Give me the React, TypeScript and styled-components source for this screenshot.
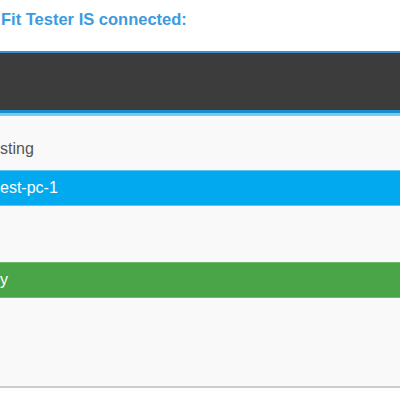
import React from "react";
import styled, { createGlobalStyle } from "styled-components";

const Global = createGlobalStyle`
  html, body { margin: 0; padding: 0; background: #ffffff; }
  body { font-family: "Liberation Sans", Arial, sans-serif; width: 400px; height: 400px; overflow: hidden; }
`;

const Page = styled.div`
  display: flex;
  flex-direction: column;
  width: 400px;
`;

const Title = styled.h1`
  margin: 0;
  height: 51px;
  box-sizing: border-box;
  padding: 9px 0 0 1px;
  font-size: 16.5px;
  font-weight: 700;
  line-height: 20px;
  color: #3c9be0;
`;

const Header = styled.div`
  height: 57px;
  background: #3c3c3c;
  border-top: 2px solid #3d8fcf;
  border-bottom: 3px solid #1d8ccc;
  box-shadow: 0 3px 0 #6fcdf3;
`;

const Panel = styled.div`
  margin-top: 3px;
  height: 270px;
  background: #f9f9f9;
  border-bottom: 2px solid #cdcdcd;
  display: flex;
  flex-direction: column;
`;

const Label = styled.div`
  margin-top: 16px;
  height: 34px;
  display: flex;
  align-items: center;
  font-size: 16px;
  color: #555555;
`;

const Bar = styled.div<{ $bg: string; $edge: string; $top: number }>`
  margin-top: ${(p) => p.$top}px;
  height: 34px;
  display: flex;
  align-items: center;
  background: ${(p) => p.$bg};
  border-top: 1px solid ${(p) => p.$edge};
  border-bottom: 1px solid ${(p) => p.$edge};
  font-size: 16px;
  color: #ffffff;
`;

export default function App() {
  return (
    <>
      <Global />
      <Page>
        <Title>Fit Tester IS connected:</Title>
        <Header />
        <Panel>
          <Label>sting</Label>
          <Bar $bg="#03a9ef" $edge="#5cc3f0" $top={4}>est-pc-1</Bar>
          <Bar $bg="#49a547" $edge="#6dba6a" $top={56}>y</Bar>
        </Panel>
      </Page>
    </>
  );
}
